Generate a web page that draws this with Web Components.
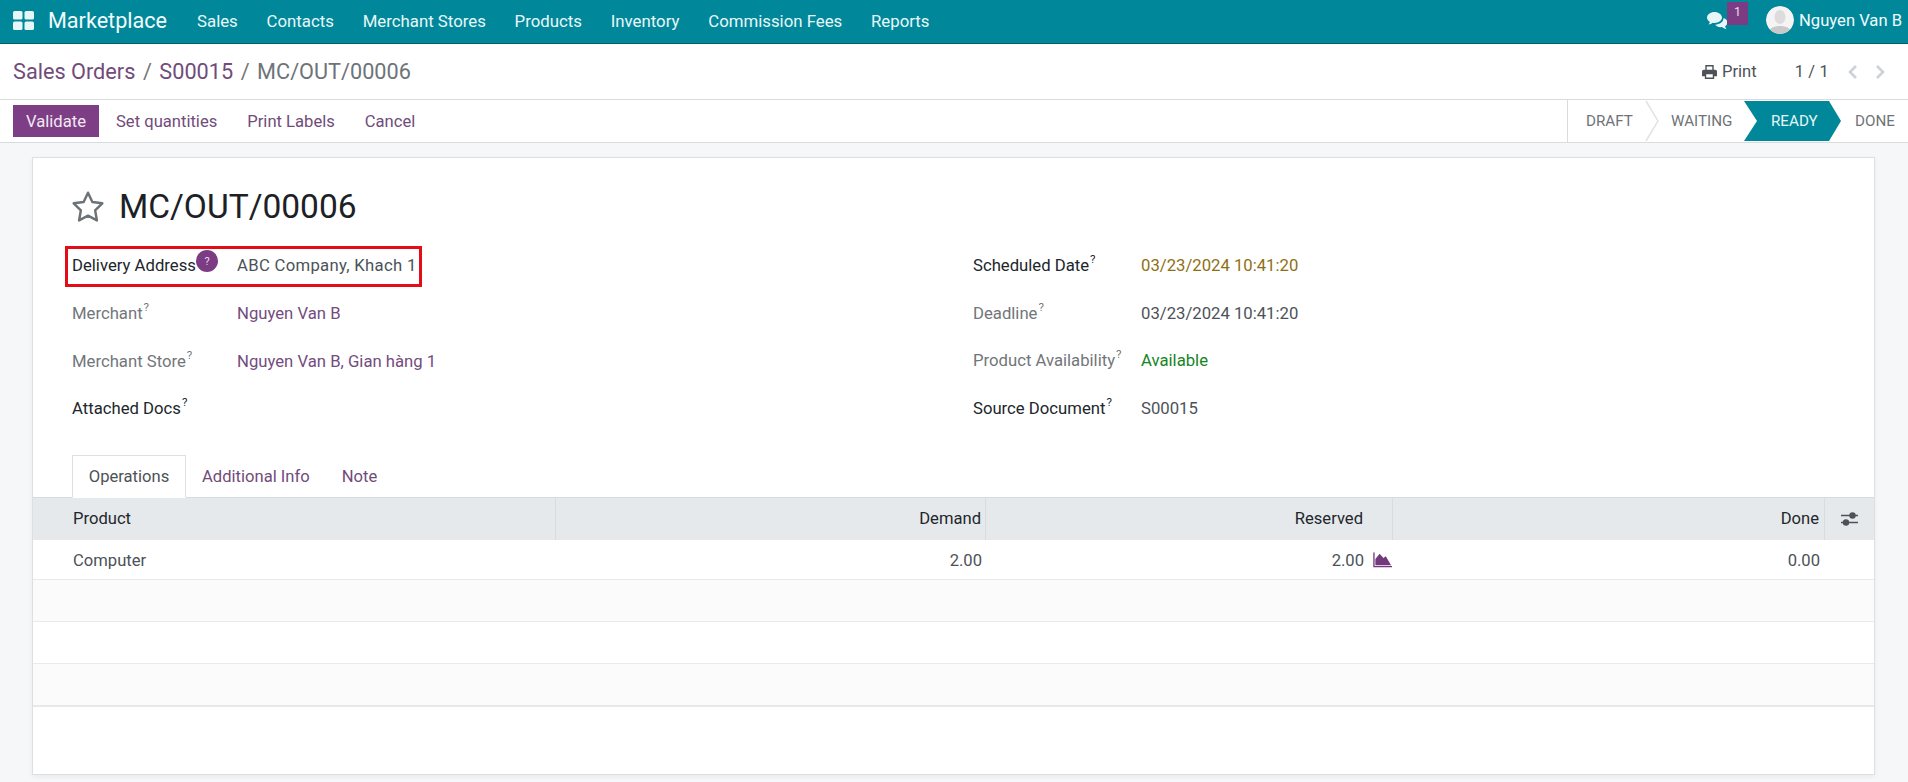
<!DOCTYPE html>
<html lang="en">
<head>
<meta charset="utf-8">
<title>MC/OUT/00006</title>
<style>
html,body{margin:0;padding:0;height:782px;overflow:hidden;background:#f6f7f9;font-family:Roboto,"Liberation Sans",sans-serif;font-size:16.6px;color:#4c5258}
</style>
</head>
<body>
<mp-navbar></mp-navbar>
<mp-breadcrumb></mp-breadcrumb>
<mp-actionbar></mp-actionbar>
<mp-sheet></mp-sheet>
<script>
function def(name, html){
  customElements.define(name, class extends HTMLElement{
    constructor(){super();this.attachShadow({mode:'open'}).innerHTML=html;}
  });
}
def('mp-navbar',`<style>
:host{display:flex;align-items:center;height:43px;background:#00889a;border-bottom:1px solid #0b5a66;color:#fff;box-sizing:content-box;position:relative}
.apps{margin-left:13px;width:21px;height:19px;display:block;margin-top:-2px}
.brand{font-size:21.6px;margin-left:14px;margin-right:30px;color:#f2fbfc;position:relative;top:-1px}
nav{display:flex;gap:28.800px;position:relative;top:-1px;font-size:16.800px}
nav span{color:#e9f7f8}
.right{margin-left:auto;display:flex;align-items:center;align-self:stretch;position:relative}
.chat{width:21px;height:18px;display:block;margin-top:-2px}
.badge{width:21px;height:23px;background:#7c3c84;color:#e9dcec;font-size:12.500px;display:flex;justify-content:center;line-height:19px;align-self:flex-start;margin-top:2px;border-radius:1px;margin-right:-1px;position:relative;left:-1px}
.av{width:28px;height:28px;border-radius:50%;margin-left:18px;margin-right:5px;display:block;margin-top:-3px}
.name{margin-right:6px;color:#f2fbfc;position:relative;top:-1px}
</style>
<svg class="apps" viewBox="0 0 21 19"><g fill="#e8f6f8"><rect x="0" y="0" width="9.500" height="8.500" rx="1.600"/><rect x="11.500" y="0" width="9.500" height="8.500" rx="1.600"/><rect x="0" y="10.500" width="9.500" height="8.500" rx="1.600"/><rect x="11.500" y="10.500" width="9.500" height="8.500" rx="1.600"/></g></svg>
<span class="brand">Marketplace</span>
<nav><span>Sales</span><span>Contacts</span><span>Merchant Stores</span><span>Products</span><span>Inventory</span><span>Commission Fees</span><span>Reports</span></nav>
<div class="right">
<svg class="chat" viewBox="0 0 21 18"><path fill="#e8f6f8" d="M7.500 0C3.400 0 0 2.500 0 5.600c0 1.800 1.100 3.400 2.900 4.400-.2.900-.7 1.800-1.400 2.600 1.600-.2 3-.9 4.100-1.800.6.100 1.200.2 1.900.2 4.100 0 7.500-2.500 7.500-5.400S11.600 0 7.500 0z"/><path fill="#e8f6f8" d="M16.400 5.500c.1.300.1.500.1.800 0 3.600-3.700 6.300-8.300 6.400 1.100 1.500 3.100 2.500 5.400 2.500.5 0 1-.1 1.500-.1.900.9 2.500 1.800 4.400 2.100-.6-.8-1.200-1.800-1.400-2.900 1.500-.9 2.400-2.300 2.400-3.800 0-2-1.700-3.700-4.100-4.500z"/></svg>
<span class="badge">1</span>
<svg class="av" viewBox="0 0 28 28"><defs><clipPath id="c"><circle cx="14" cy="14" r="14"/></clipPath></defs><g clip-path="url(#c)"><rect width="28" height="28" fill="#f4f4f4"/><ellipse cx="14" cy="11" rx="5.500" ry="7" fill="#dcdcdc"/><path d="M2 28c1-6 6-8 12-8s11 2 12 8z" fill="#c9c9c9"/></g></svg>
<span class="name">Nguyen Van B</span>
</div>`);

def('mp-breadcrumb',`<style>
:host{display:flex;align-items:center;height:55px;background:#fff;border-bottom:1px solid #d9dcdf;position:relative}
.crumbs{margin-left:13px;font-size:21.700px;display:flex;gap:7.500px}
a{color:#714b7a}
i{font-style:normal;color:#777}
.cur{color:#6d7378}
.print{margin-left:auto;display:flex;align-items:center;gap:5px;color:#4c5258;font-size:16.600px}
.print svg{width:15px;height:14px;display:block}
.pager{margin-left:38px;font-size:16.400px;color:#4c5258;letter-spacing:.2px}
.nav{margin-left:18px;margin-right:22px;display:flex;gap:17px}
.nav svg{width:11px;height:16px;display:block}
</style>
<div class="crumbs"><a>Sales Orders</a><i>/</i><a>S00015</a><i>/</i><span class="cur">MC/OUT/00006</span></div>
<div class="print"><svg viewBox="0 0 16 15"><path fill="#4c5258" d="M3.500 0h9v5h-1.500V1.500h-6V5h-1.500zM1.800 5h12.400A1.800 1.800 0 0 1 16 6.800V12h-3v3H3v-3H0V6.800A1.800 1.800 0 0 1 1.800 5zM4.500 10v3.500h7V10z"/></svg><span>Print</span></div>
<span class="pager">1 / 1</span>
<div class="nav"><svg viewBox="0 0 11 16"><path d="M9 2 3 8l6 6" fill="none" stroke="#cfd2d5" stroke-width="2.600"/></svg><svg viewBox="0 0 11 16"><path d="M2 2l6 6-6 6" fill="none" stroke="#cfd2d5" stroke-width="2.600"/></svg></div>`);

def('mp-actionbar',`<style>
:host{display:flex;align-items:center;height:42px;background:#fff;border-bottom:1px solid #d9dcdf;position:relative}
.btn{margin-left:13px;height:32px;width:86px;background:#7e3e86;color:#f1e9f2;display:flex;align-items:center;justify-content:center}
a{color:#714b7a;margin-left:30px}
a.first{margin-left:17px}
mp-status{margin-left:auto}
</style>
<span class="btn">Validate</span><a class="first">Set quantities</a><a>Print Labels</a><a>Cancel</a><mp-status></mp-status>`);

def('mp-status',`<style>
:host{display:flex;align-items:center;height:42px;width:341px;border-left:1px solid #d9dcdf;box-sizing:border-box;font-size:15.200px;color:#6f7377;position:relative}
span{position:absolute;top:0;line-height:42px}
svg{position:absolute;left:0;top:0;width:340px;height:42px}
.r{color:#e6f5f7}
</style>
<svg viewBox="0 0 340 42"><path d="M78 1l12 20-12 20" fill="none" stroke="#e1e3e5" stroke-width="1.500"/><path fill="#00889a" d="M176 1h85l12 20-12 20h-85l13-20z"/></svg>
<span style="left:18px">DRAFT</span><span style="left:103px">WAITING</span><span class="r" style="left:203px">READY</span><span style="left:287px">DONE</span>`);

def('mp-field',`<style>
:host{display:grid;grid-template-columns:var(--lw) 1fr;align-items:center;height:var(--rh);color:#1f2428;font-size:16.700px}
.l{color:var(--lc,#21262b);white-space:nowrap}
sup{font-size:11.500px;line-height:0;vertical-align:8px;margin-left:1px}
.v{color:var(--vc,#4c5258);white-space:nowrap}
</style>
<span class="l"><slot name="label"></slot><sup>?</sup></span><span class="v"><slot></slot></span>`);

def('mp-sheet',`<style>
:host{display:block;margin:14px 33px 0 32px;height:618px;box-sizing:border-box;background:#fff;border:1px solid #dde0e3;box-shadow:0 2px 5px rgba(0,0,0,.05);position:relative}
.title{display:flex;align-items:flex-start;padding:29px 0 0 38px;height:65px;box-sizing:content-box}
.title svg{width:34px;height:33px;display:block;margin-top:3px}
h1{margin:0 0 0 14px;font-size:33.500px;font-weight:400;color:#1c2126;line-height:40px}
.cols{display:grid;grid-template-columns:740px 1fr;padding:0 0 0 39px;margin-top:-10px}
.c1{--lw:165px;--rh:47.700px;display:flex;flex-direction:column}
.c2{--lw:168px;--rh:47.500px;display:flex;flex-direction:column;margin-left:161px}
.muted{--lc:#72767a}
.link{--vc:#744b80}
.warn{--vc:#8f6f13}
.ok{--vc:#15851f}
.red{position:absolute;left:32px;top:88px;width:357px;height:41px;box-sizing:border-box;border:3px solid #e30d17}
.q{position:absolute;left:163px;top:92px;width:22px;height:22px;border-radius:50%;background:#7c3c84;color:#e8d9ea;font-size:11px;display:flex;align-items:center;justify-content:center}
mp-tabs{margin-top:22.200px}
.wide{letter-spacing:.3px}
</style>
<div class="title"><svg viewBox="0 0 32 31"><path d="M16 2.500l4.100 8.700 9.400 1.300-6.800 6.600 1.700 9.500L16 24.100 7.600 28.600l1.700-9.500-6.800-6.600 9.400-1.300z" fill="none" stroke="#6c7276" stroke-width="2.300" stroke-linejoin="round"/></svg><h1>MC/OUT/00006</h1></div>
<div class="cols">
<div class="c1">
<mp-field><span slot="label">Delivery Address</span><span class="wide">ABC Company, Khach 1</span></mp-field>
<mp-field class="muted link"><span slot="label">Merchant</span>Nguyen Van B</mp-field>
<mp-field class="muted link"><span slot="label">Merchant Store</span>Nguyen Van B, Gian hàng 1</mp-field>
<mp-field><span slot="label">Attached Docs</span></mp-field>
</div>
<div class="c2">
<mp-field class="warn"><span slot="label">Scheduled Date</span>03/23/2024 10:41:20</mp-field>
<mp-field class="muted"><span slot="label">Deadline</span>03/23/2024 10:41:20</mp-field>
<mp-field class="muted ok"><span slot="label">Product Availability</span>Available</mp-field>
<mp-field><span slot="label">Source Document</span>S00015</mp-field>
</div>
</div>
<mp-tabs></mp-tabs>
<mp-table></mp-table>
<div class="red"></div>
<div class="q">?</div>`);

def('mp-tabs',`<style>
:host{display:flex;height:42px;padding-left:39px;position:relative;z-index:1}
span{display:flex;align-items:center;padding:1px 16px 0;color:#714b7a;height:42px;box-sizing:border-box}
.a{border:1px solid #dde0e3;border-bottom:1px solid #fff;color:#4c5258;height:43px;width:114px;justify-content:center;padding:0}
</style>
<span class="a">Operations</span><span>Additional Info</span><span>Note</span>`);

def('mp-table',`<style>
:host{display:block}
.row{display:grid;grid-template-columns:523px 430px 407px 432px 49px;box-sizing:border-box;align-items:center}
.head{height:43px;background:#e6e9ec;color:#22272b;border-top:1px solid #d8dbde}
.head>div{height:100%;display:flex;align-items:center;box-sizing:border-box;border-right:1px solid #d9dcdf;justify-content:flex-end;padding:0 4px 1px 0}
.head>div:first-child{justify-content:flex-start;padding-left:40px}
.head>div:last-child{border:0;justify-content:center;padding:0}
.body{height:40px;border-bottom:1px solid #e8eaec;padding-top:2px}
.body>div{text-align:right;padding-right:4px;display:flex;justify-content:flex-end;align-items:center}
.body>div:first-child{justify-content:flex-start;padding-left:40px}
.e{height:42px;border-bottom:1px solid #e8eaec;box-sizing:border-box}
.s{background:#fbfbfb}
.last{height:43px;border-bottom:2px solid #e6e8ea}
.res{padding-right:0!important;gap:9px}
.res svg{margin-right:1px}
</style>
<div class="row head"><div>Product</div><div>Demand</div><div style="padding-right:29px">Reserved</div><div style="padding-right:5px">Done</div><div><svg width="19" height="16" viewBox="0 0 19 16"><g stroke="#4c5258" stroke-width="1.600"><path d="M1 4.500h17M1 11.500h17"/></g><circle cx="12.500" cy="4.500" r="3.200" fill="#4c5258"/><circle cx="6" cy="11.500" r="3.200" fill="#4c5258"/></svg></div></div>
<div class="row body"><div>Computer</div><div>2.00</div><div class="res"><span>2.00</span><svg width="19" height="16" viewBox="0 0 20 16"><path d="M1 0v15h19" fill="none" stroke="#74397c" stroke-width="1.400"/><path fill="#74397c" d="M2.500 13.500V7L7 1.500l4 4.500 2.500-2L19 13.500z"/></svg></div><div style="padding-right:5px">0.00</div><div></div></div>
<div class="e s"></div><div class="e"></div><div class="e s last"></div>`);
</script>
</body>
</html>
